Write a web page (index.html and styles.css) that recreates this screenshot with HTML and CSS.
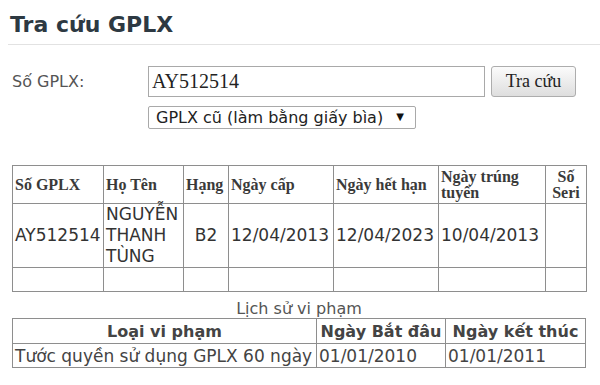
FILE: index.html
```html
<!DOCTYPE html>
<html>
<head>
    <title>Tra cứu GPLX</title>
    <link rel="stylesheet" href="styles.css">
</head>
<body>
    <div class="page">
        <h1 class="title">Tra cứu GPLX</h1>

        <form class="search">
            <label class="search-label" for="so-gplx">Số GPLX:</label>
            <div class="search-fields">
                <div class="search-row">
                    <input type="text" id="so-gplx" value="AY512514" />
                    <button type="button">Tra cứu</button>
                </div>
                <div class="select-wrap">
                    <select id="loai-gplx">
                        <option>GPLX cũ (làm bằng giấy bìa)</option>
                        <option>GPLX mới (PET)</option>
                    </select>
                </div>
            </div>
        </form>

        <table class="result">
            <colgroup>
                <col style="width: 91px">
                <col style="width: 80px">
                <col style="width: 45px">
                <col style="width: 105px">
                <col style="width: 105px">
                <col style="width: 107px">
                <col style="width: 41px">
            </colgroup>
            <tr>
                <th>Số GPLX</th>
                <th>Họ Tên</th>
                <th>Hạng</th>
                <th>Ngày cấp</th>
                <th>Ngày hết hạn</th>
                <th>Ngày trúng tuyển</th>
                <th class="center">Số Seri</th>
            </tr>
            <tr class="data">
                <td>AY512514</td>
                <td>NGUYỄN THANH TÙNG</td>
                <td class="center">B2</td>
                <td>12/04/2013</td>
                <td>12/04/2023</td>
                <td>10/04/2013</td>
                <td></td>
            </tr>
            <tr class="empty">
                <td></td><td></td><td></td><td></td><td></td><td></td><td></td>
            </tr>
        </table>

        <table class="history">
            <caption>Lịch sử vi phạm</caption>
            <colgroup>
                <col style="width: 304px">
                <col style="width: 129px">
                <col style="width: 140px">
            </colgroup>
            <tr>
                <th>Loại vi phạm</th>
                <th>Ngày Bắt đâu</th>
                <th>Ngày kết thúc</th>
            </tr>
            <tr>
                <td>Tước quyền sử dụng GPLX 60 ngày</td>
                <td>01/01/2010</td>
                <td>01/01/2011</td>
            </tr>
        </table>
    </div>
</body>
</html>
```

FILE: styles.css
```css
body { margin: 0; font-family: "DejaVu Sans", Verdana, sans-serif; color: #333; background: #fff; }
.page { padding: 12px 0 0 8px; }

.title { margin: 0; padding: 0 0 6px 2px; font-size: 22px; line-height: 26px; font-weight: bold; color: #2d3942; border-bottom: 1px solid #e2e2e2; }

.search { display: flex; align-items: flex-start; margin: 21px 0 0 4px; }
.search-label { width: 136px; height: 31px; line-height: 31px; font-size: 16px; color: #555; }
.search-row { display: flex; gap: 6px; }
.search-row input { width: 337px; height: 31px; box-sizing: border-box; margin: 0; padding: 0 3px; border: 1px solid #a9a9a9; font-family: "Liberation Serif", "Times New Roman", serif; font-size: 20px; color: #222; }
.search-row button { width: 85px; height: 31px; margin: 0; padding: 0; border: 1px solid #adadad; border-radius: 3px; background: linear-gradient(#fbfbfb, #dedede); font-family: "Liberation Serif", "Times New Roman", serif; font-size: 18px; color: #222; cursor: pointer; }

.select-wrap { position: relative; width: 268px; margin-top: 9px; }
.select-wrap select { appearance: none; -webkit-appearance: none; width: 268px; height: 23px; box-sizing: border-box; margin: 0; padding: 0 0 0 7px; border: 1px solid #a9a9a9; border-radius: 2px; background: #fff; font-family: "DejaVu Sans", Verdana, sans-serif; font-size: 16px; color: #222; }
.select-wrap::after { content: "\25BC"; position: absolute; right: 12px; top: 5px; font-size: 10px; color: #111; pointer-events: none; }

table { border-collapse: collapse; table-layout: fixed; margin-left: 4px; }
th, td { border: 1px solid #8e8e8e; }

.result { width: 574px; margin-top: 36px; }
.result th { height: 37px; padding: 0 2px; text-align: left; vertical-align: middle; font-family: "Liberation Serif", "Times New Roman", serif; font-size: 16px; line-height: 16px; font-weight: bold; color: #3a3a3a; }
.result td { padding: 0 2px; font-size: 17px; line-height: 21px; vertical-align: middle; color: #333; }
.result .data td { height: 63px; }
.result .empty td { height: 23px; }
.result .center { text-align: center; }

.history { width: 573px; margin-top: 7px; color: #444; }
.history caption { font-size: 16px; line-height: 19px; color: #555; }
.history th { height: 24px; padding: 0 2px; font-size: 16px; font-weight: bold; text-align: center; }
.history td { height: 23px; padding: 0 2px; font-size: 17px; text-align: left; }
```
